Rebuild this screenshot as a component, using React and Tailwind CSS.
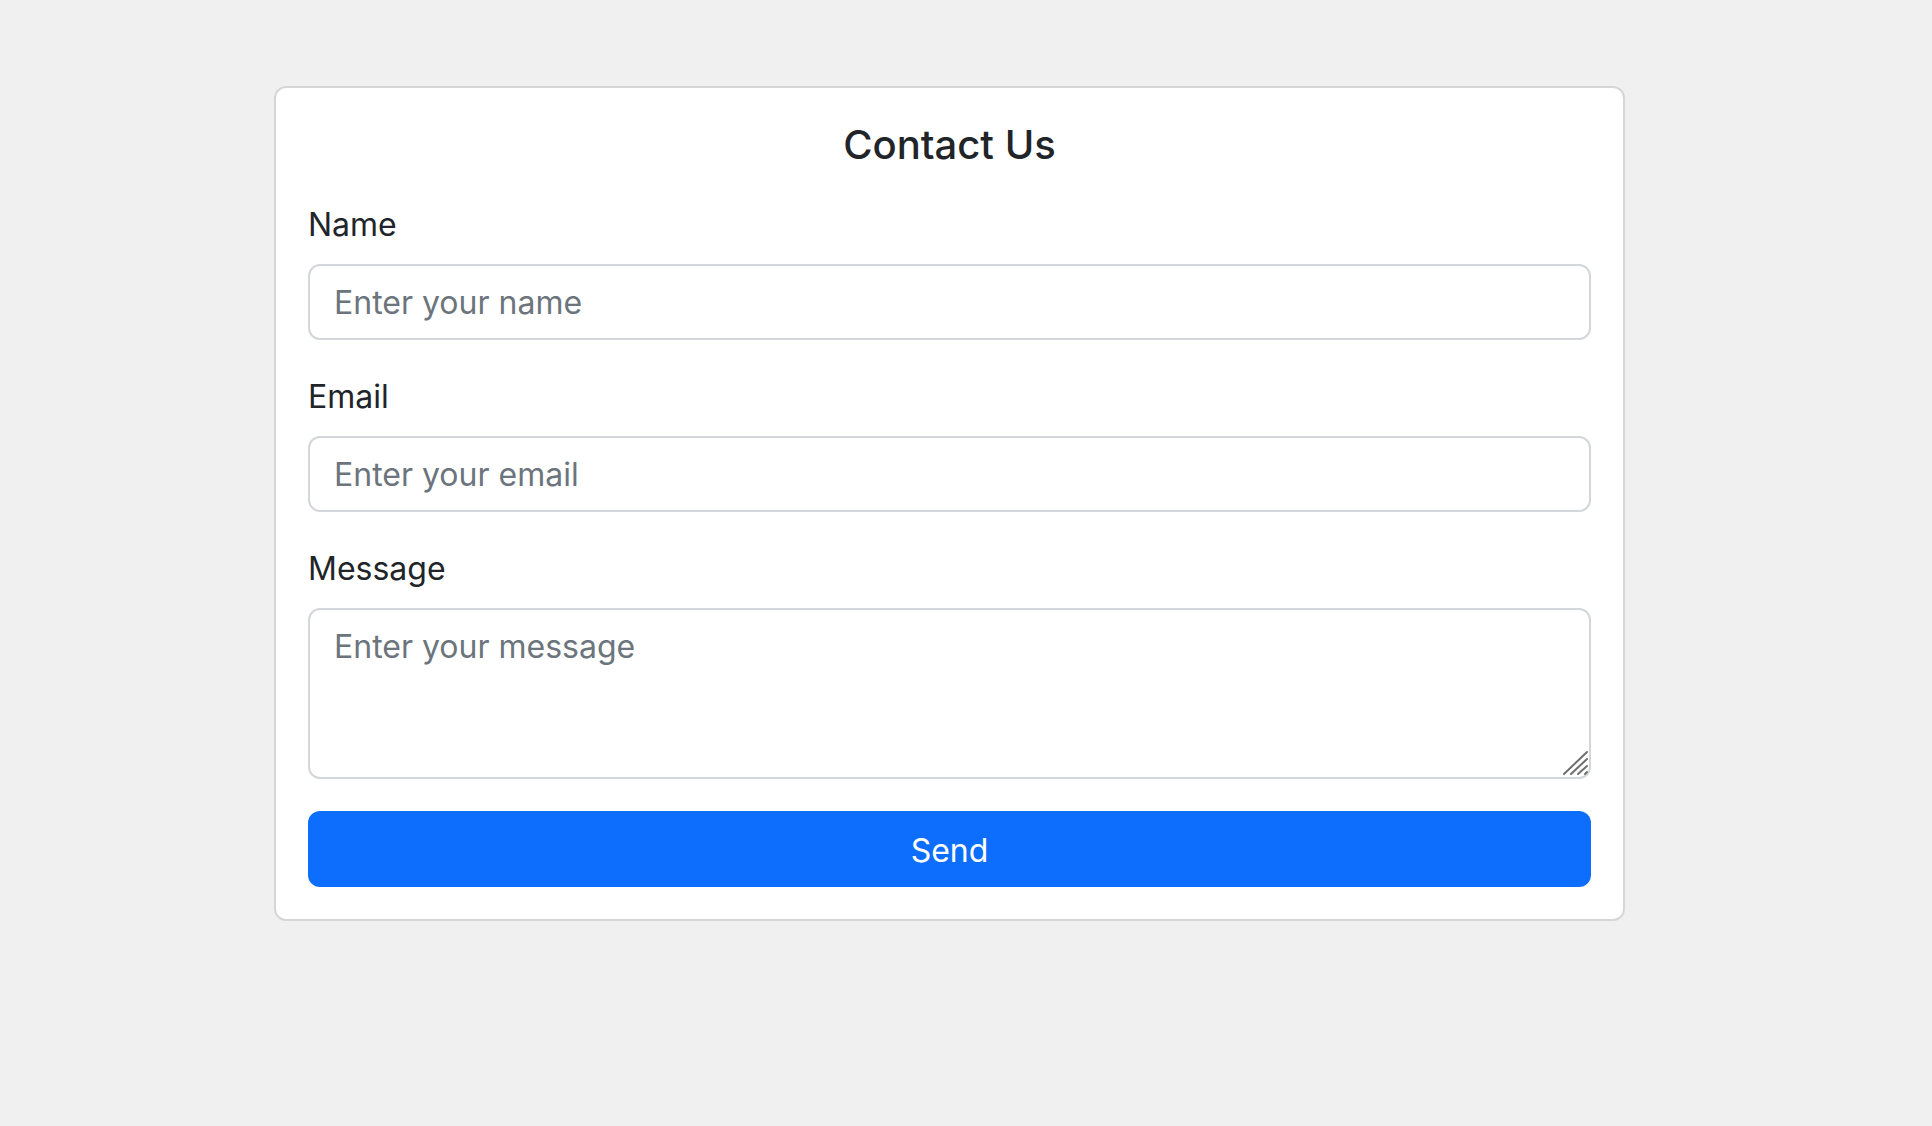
/* Contact form — card with three fields and a full-width send button */

function ResizeGrip() {
  return (
    <svg
      width="27"
      height="26"
      viewBox="0 0 27 26"
      className="absolute right-[2px] bottom-[3px] pointer-events-none"
      aria-hidden="true">
      <g stroke="#707070" strokeWidth="2" strokeLinecap="round" fill="none">
        <line x1="2" y1="24" x2="25" y2="2" />
        <line x1="9" y1="24" x2="25" y2="9" />
        <line x1="16" y1="24" x2="25" y2="16" />
        <line x1="23" y1="24" x2="25" y2="22" />
      </g>
    </svg>
  )
}

function Field({ id, label, placeholder, multiline = false }) {
  return (
    <div className="mb-8">
      <label htmlFor={id} className="block pt-[1px] mb-[15px] text-[32px] leading-[48px] text-[#212529]">
        {label}
      </label>
      {multiline ? (
        <div className="relative">
          <textarea
            id={id}
            rows={3}
            placeholder={placeholder}
            className="block w-full h-[171px] px-6 pt-[13px] pb-[11px] text-[32px] leading-[48px] text-[#212529] bg-white border-2 border-[#d3d6da] rounded-[12px] outline-none resize-none placeholder:text-[#6c757d]"
          />
          <ResizeGrip />
        </div>
      ) : (
        <input
          id={id}
          type="text"
          placeholder={placeholder}
          className="block w-full h-[76px] px-6 py-3 text-[32px] leading-[48px] text-[#212529] bg-white border-2 border-[#d3d6da] rounded-[12px] outline-none placeholder:text-[#6c757d]"
        />
      )}
    </div>
  )
}

export default function App() {
  return (
    <div className="min-h-screen bg-[#f0f0f0] pt-[86px] font-['Inter','Liberation_Sans',sans-serif]">
      <div className="ml-[274px] w-[1351px] bg-white border-2 border-[#d6d6d7] rounded-[12px] p-8">
        <h2 className="pt-[1px] mb-[31px] text-center text-[40px] leading-[48px] font-medium text-[#212529]">
          Contact Us
        </h2>

        <form onSubmit={(e) => e.preventDefault()}>
          <Field id="name" label="Name" placeholder="Enter your name" />
          <Field id="email" label="Email" placeholder="Enter your email" />
          <Field id="message" label="Message" placeholder="Enter your message" multiline />

          <button
            type="submit"
            className="block w-full h-[76px] pt-[4px] bg-[#0d6efd] text-white text-[32px] leading-[48px] rounded-[12px]">
            Send
          </button>
        </form>
      </div>
    </div>
  )
}
